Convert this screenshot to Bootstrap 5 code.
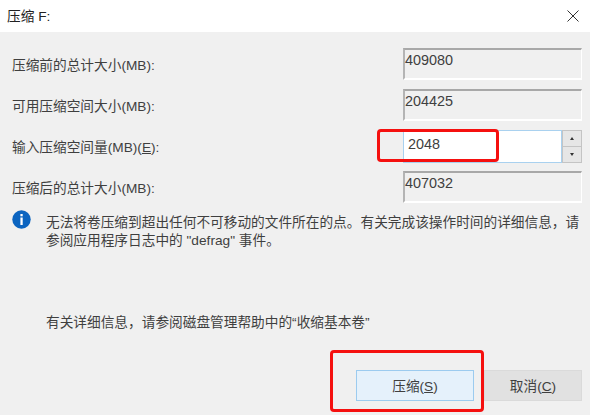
<!DOCTYPE html>
<html lang="zh-CN">
<head>
<meta charset="utf-8">
<title>压缩 F:</title>
<link href="https://cdn.jsdelivr.net/npm/bootstrap@5.3.0/dist/css/bootstrap.min.css" rel="stylesheet">
<style>
html,body{height:415px;overflow:hidden;}
body{background:#f0f0f0;color:#3f3f3f;font-family:"Liberation Sans","Noto Sans CJK SC",sans-serif;font-size:13.68px;line-height:18px;position:relative;}
.dlg-title{height:32px;background:#fff;padding:2px 11px 0 7px;color:#222;}
.dlg-close{width:12px;height:12px;display:block;margin-top:-2px;}
.dlg-body{padding:16px 8px 0 12px;}
.field-row{height:32px;margin-bottom:9px;}
.field-label{width:391px;padding-top:4px;}
.ro-box{width:179px;height:32px;border-top:2px solid #a8a8a8;border-left:2px solid #b4b4b4;border-right:1px solid #fff;border-bottom:2px solid #fff;padding:1px 0 0;font-size:14.4px;}
.spin-wrap{width:179px;height:33px;}
.spin-input{flex:1;background:#fff;border:1px solid #a9d1ef;padding:4px 0 0 4px;font-size:14.4px;}
.spin-btns{width:20px;background:#d9d9d9;border:1px solid #c4c4c4;}
.spin-btn{flex:1;background:#e6e6e6;font-size:0;}
.spin-btn+.spin-btn{border-top:1px solid #c4c4c4;}
.tri-up{border-left:2.5px solid transparent;border-right:2.5px solid transparent;border-bottom:3px solid #333;}
.tri-dn{border-left:2.5px solid transparent;border-right:2.5px solid transparent;border-top:3px solid #333;}
.info-row{margin-top:6px;gap:15px;padding-left:0;}
.info-ico{width:19px;height:19px;flex:none;margin-top:-2px;}
.info-text{width:536px;margin:0;padding-top:2px;}
.more-text{margin:64px 0 0 34px;}
.dlg-btns{gap:10px;margin-top:38px;}
.win-btn{height:31px;border-radius:0;font-size:13.68px;line-height:18px;color:#3f3f3f;padding:3px 0 0;}
.win-ok{width:118px;background:#e5f1fb;border:1px solid #9ccbef;}
.win-cancel{width:98px;background:#e1e1e1;border:1px solid #dadada;}
.mark-red{position:absolute;border:3px solid #f5100f;border-radius:4px;pointer-events:none;}
.mark-a{left:377px;top:129px;width:122px;height:33px;}
.mark-b{left:330px;top:350px;width:154px;height:62px;}
</style>
</head>
<body>
<div class="dlg-title d-flex align-items-center justify-content-between">
  <span>压缩 F:</span>
  <svg class="dlg-close" viewBox="0 0 12 12"><path d="M.5.5l11 11M11.5.5l-11 11" stroke="#333" stroke-width="1" fill="none"/></svg>
</div>
<div class="dlg-body">
  <div class="field-row d-flex align-items-center"><div class="field-label">压缩前的总计大小(MB):</div><div class="ro-box">409080</div></div>
  <div class="field-row d-flex align-items-center"><div class="field-label">可用压缩空间大小(MB):</div><div class="ro-box">204425</div></div>
  <div class="field-row d-flex align-items-center"><div class="field-label">输入压缩空间量(MB)(<u>E</u>):</div>
    <div class="spin-wrap d-flex">
      <div class="spin-input">2048</div>
      <div class="spin-btns d-flex flex-column">
        <div class="spin-btn d-flex align-items-center justify-content-center"><span class="tri-up"></span></div>
        <div class="spin-btn d-flex align-items-center justify-content-center"><span class="tri-dn"></span></div>
      </div>
    </div>
  </div>
  <div class="field-row d-flex align-items-center"><div class="field-label">压缩后的总计大小(MB):</div><div class="ro-box">407032</div></div>
  <div class="info-row d-flex align-items-start">
    <svg class="info-ico" viewBox="0 0 19 19"><circle cx="9.5" cy="9.5" r="9.2" fill="#0b64c0"/><rect x="8.4" y="4" width="2.3" height="2.3" fill="#fff"/><rect x="8.4" y="7.5" width="2.3" height="7.5" fill="#fff"/></svg>
    <p class="info-text">无法将卷压缩到超出任何不可移动的文件所在的点。有关完成该操作时间的详细信息，请参阅应用程序日志中的 "defrag" 事件。</p>
  </div>
  <p class="more-text">有关详细信息，请参阅磁盘管理帮助中的“收缩基本卷”</p>
  <div class="dlg-btns d-flex justify-content-end">
    <button type="button" class="btn win-btn win-ok">压缩(<u>S</u>)</button>
    <button type="button" class="btn win-btn win-cancel">取消(<u>C</u>)</button>
  </div>
</div>
<div class="mark-red mark-a"></div>
<div class="mark-red mark-b"></div>
<script src="https://cdn.jsdelivr.net/npm/bootstrap@5.3.0/dist/js/bootstrap.bundle.min.js"></script>
</body>
</html>
